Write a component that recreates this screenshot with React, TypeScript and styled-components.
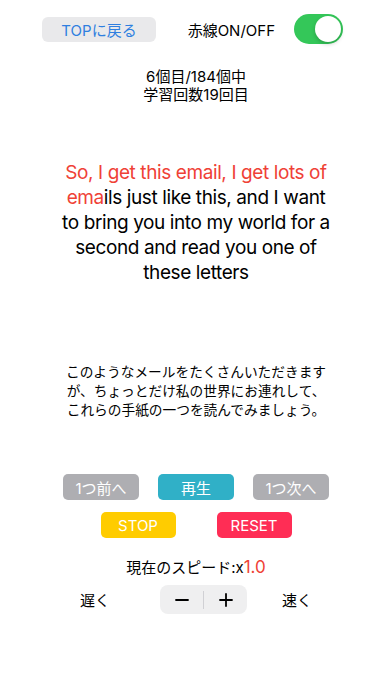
import React, { useState } from 'react';
import styled, { createGlobalStyle } from 'styled-components';

const GlobalStyle = createGlobalStyle`
  html, body {
    margin: 0;
    padding: 0;
    background: #ffffff;
  }
  body {
    font-family: Inter, "Noto Sans CJK JP", sans-serif;
    color: #000;
  }
`;

const Page = styled.div`
  width: 392px;
  min-height: 696px;
  display: flex;
  flex-direction: column;
  align-items: center;
`;

const Header = styled.div`
  width: 100%;
  box-sizing: border-box;
  display: flex;
  align-items: center;
  justify-content: space-between;
  padding: 14px 49px 0 42px;
`;

const TopButton = styled.button`
  width: 114px;
  height: 25px;
  border: none;
  border-radius: 6px;
  background: #e9e9eb;
  color: #2f7fe0;
  font-family: inherit;
  font-size: 15px;
  padding: 0;
`;

const ToggleGroup = styled.div`
  display: flex;
  align-items: center;
  gap: 19px;
`;

const ToggleLabel = styled.span`
  font-size: 15px;
`;

const Switch = styled.div<{ $on: boolean }>`
  width: 49px;
  height: 30px;
  border-radius: 15px;
  background: ${(p) => (p.$on ? '#34c759' : '#e9e9eb')};
  position: relative;
  cursor: pointer;

  &::after {
    content: '';
    position: absolute;
    top: 2px;
    left: ${(p) => (p.$on ? '21px' : '2px')};
    width: 26px;
    height: 26px;
    border-radius: 50%;
    background: #fff;
    box-shadow: 0 2px 4px rgba(0, 0, 0, 0.2);
  }
`;

const Counter = styled.div`
  margin-top: 24px;
  font-size: 15px;
  line-height: 18px;
  text-align: center;
`;

const Sentence = styled.p`
  margin: 56px 0 0;
  font-size: 19px;
  letter-spacing: -0.4px;
  line-height: 25px;
  text-align: center;
  white-space: nowrap;
`;

const Red = styled.span`
  color: #ef4136;
`;

const Translation = styled.p`
  margin: 78px 0 0;
  font-size: 13.7px;
  line-height: 19px;
  text-align: center;
  white-space: nowrap;
`;

const ButtonRow = styled.div<{ $gap: number; $top: number }>`
  display: flex;
  gap: ${(p) => p.$gap}px;
  margin-top: ${(p) => p.$top}px;
`;

const ActionButton = styled.button<{ $bg: string; $w: number }>`
  width: ${(p) => p.$w}px;
  height: 26px;
  border: none;
  border-radius: 5px;
  background: ${(p) => p.$bg};
  color: #fff;
  font-family: inherit;
  font-size: 15px;
  padding: 0;
`;

const Speed = styled.div`
  margin-top: 20px;
  font-size: 15px;
  line-height: 18px;
`;

const SpeedValue = styled.span`
  color: #ef4136;
  font-size: 17px;
`;

const SpeedRow = styled.div`
  display: flex;
  align-items: center;
  margin-top: 8px;
`;

const SpeedLabel = styled.span<{ $ml: number }>`
  width: 80px;
  margin-left: ${(p) => p.$ml}px;
  text-align: center;
  font-size: 15px;
`;

const Stepper = styled.div`
  width: 87px;
  height: 29px;
  margin-left: 25px;
  border-radius: 8px;
  background: #efeff0;
  display: flex;
  align-items: center;
`;

const StepButton = styled.button`
  flex: 1;
  height: 100%;
  border: none;
  background: transparent;
  display: flex;
  align-items: center;
  justify-content: center;
  padding: 0;
`;

const StepDivider = styled.div`
  width: 1px;
  height: 18px;
  background: #d0d0d4;
`;

export default function App() {
  const [redOn, setRedOn] = useState(true);
  const [speed, setSpeed] = useState(1.0);

  return (
    <Page>
      <GlobalStyle />
      <Header>
        <TopButton>TOPに戻る</TopButton>
        <ToggleGroup>
          <ToggleLabel>赤線ON/OFF</ToggleLabel>
          <Switch $on={redOn} onClick={() => setRedOn(!redOn)} />
        </ToggleGroup>
      </Header>

      <Counter>
        6個目/184個中
        <br />
        学習回数19回目
      </Counter>

      <Sentence>
        <Red>So, I get this email, I get lots of</Red>
        <br />
        <Red>ema</Red>ils just like this, and I want
        <br />
        to bring you into my world for a
        <br />
        second and read you one of
        <br />
        these letters
      </Sentence>

      <Translation>
        このようなメールをたくさんいただきます
        <br />
        が、ちょっとだけ私の世界にお連れして、
        <br />
        これらの手紙の一つを読んでみましょう。
      </Translation>

      <ButtonRow $gap={19} $top={54}>
        <ActionButton $bg="#aeaeb2" $w={76}>1つ前へ</ActionButton>
        <ActionButton $bg="#30b0c7" $w={76}>再生</ActionButton>
        <ActionButton $bg="#aeaeb2" $w={76}>1つ次へ</ActionButton>
      </ButtonRow>
      <ButtonRow $gap={41} $top={12}>
        <ActionButton $bg="#ffcc00" $w={75}>STOP</ActionButton>
        <ActionButton $bg="#ff2d55" $w={75}>RESET</ActionButton>
      </ButtonRow>

      <Speed>
        現在のスピード:x<SpeedValue>{speed.toFixed(1)}</SpeedValue>
      </Speed>

      <SpeedRow>
        <SpeedLabel $ml={0}>遅く</SpeedLabel>
        <Stepper>
          <StepButton onClick={() => setSpeed(Math.max(0.5, speed - 0.1))}>
            <svg width="14" height="14" viewBox="0 0 14 14">
              <path d="M1 7h12" stroke="#000" strokeWidth="1.8" strokeLinecap="round" />
            </svg>
          </StepButton>
          <StepDivider />
          <StepButton onClick={() => setSpeed(speed + 0.1)}>
            <svg width="14" height="14" viewBox="0 0 14 14">
              <path d="M1 7h12M7 1v12" stroke="#000" strokeWidth="1.8" strokeLinecap="round" />
            </svg>
          </StepButton>
        </Stepper>
        <SpeedLabel $ml={10}>速く</SpeedLabel>
      </SpeedRow>
    </Page>
  );
}
